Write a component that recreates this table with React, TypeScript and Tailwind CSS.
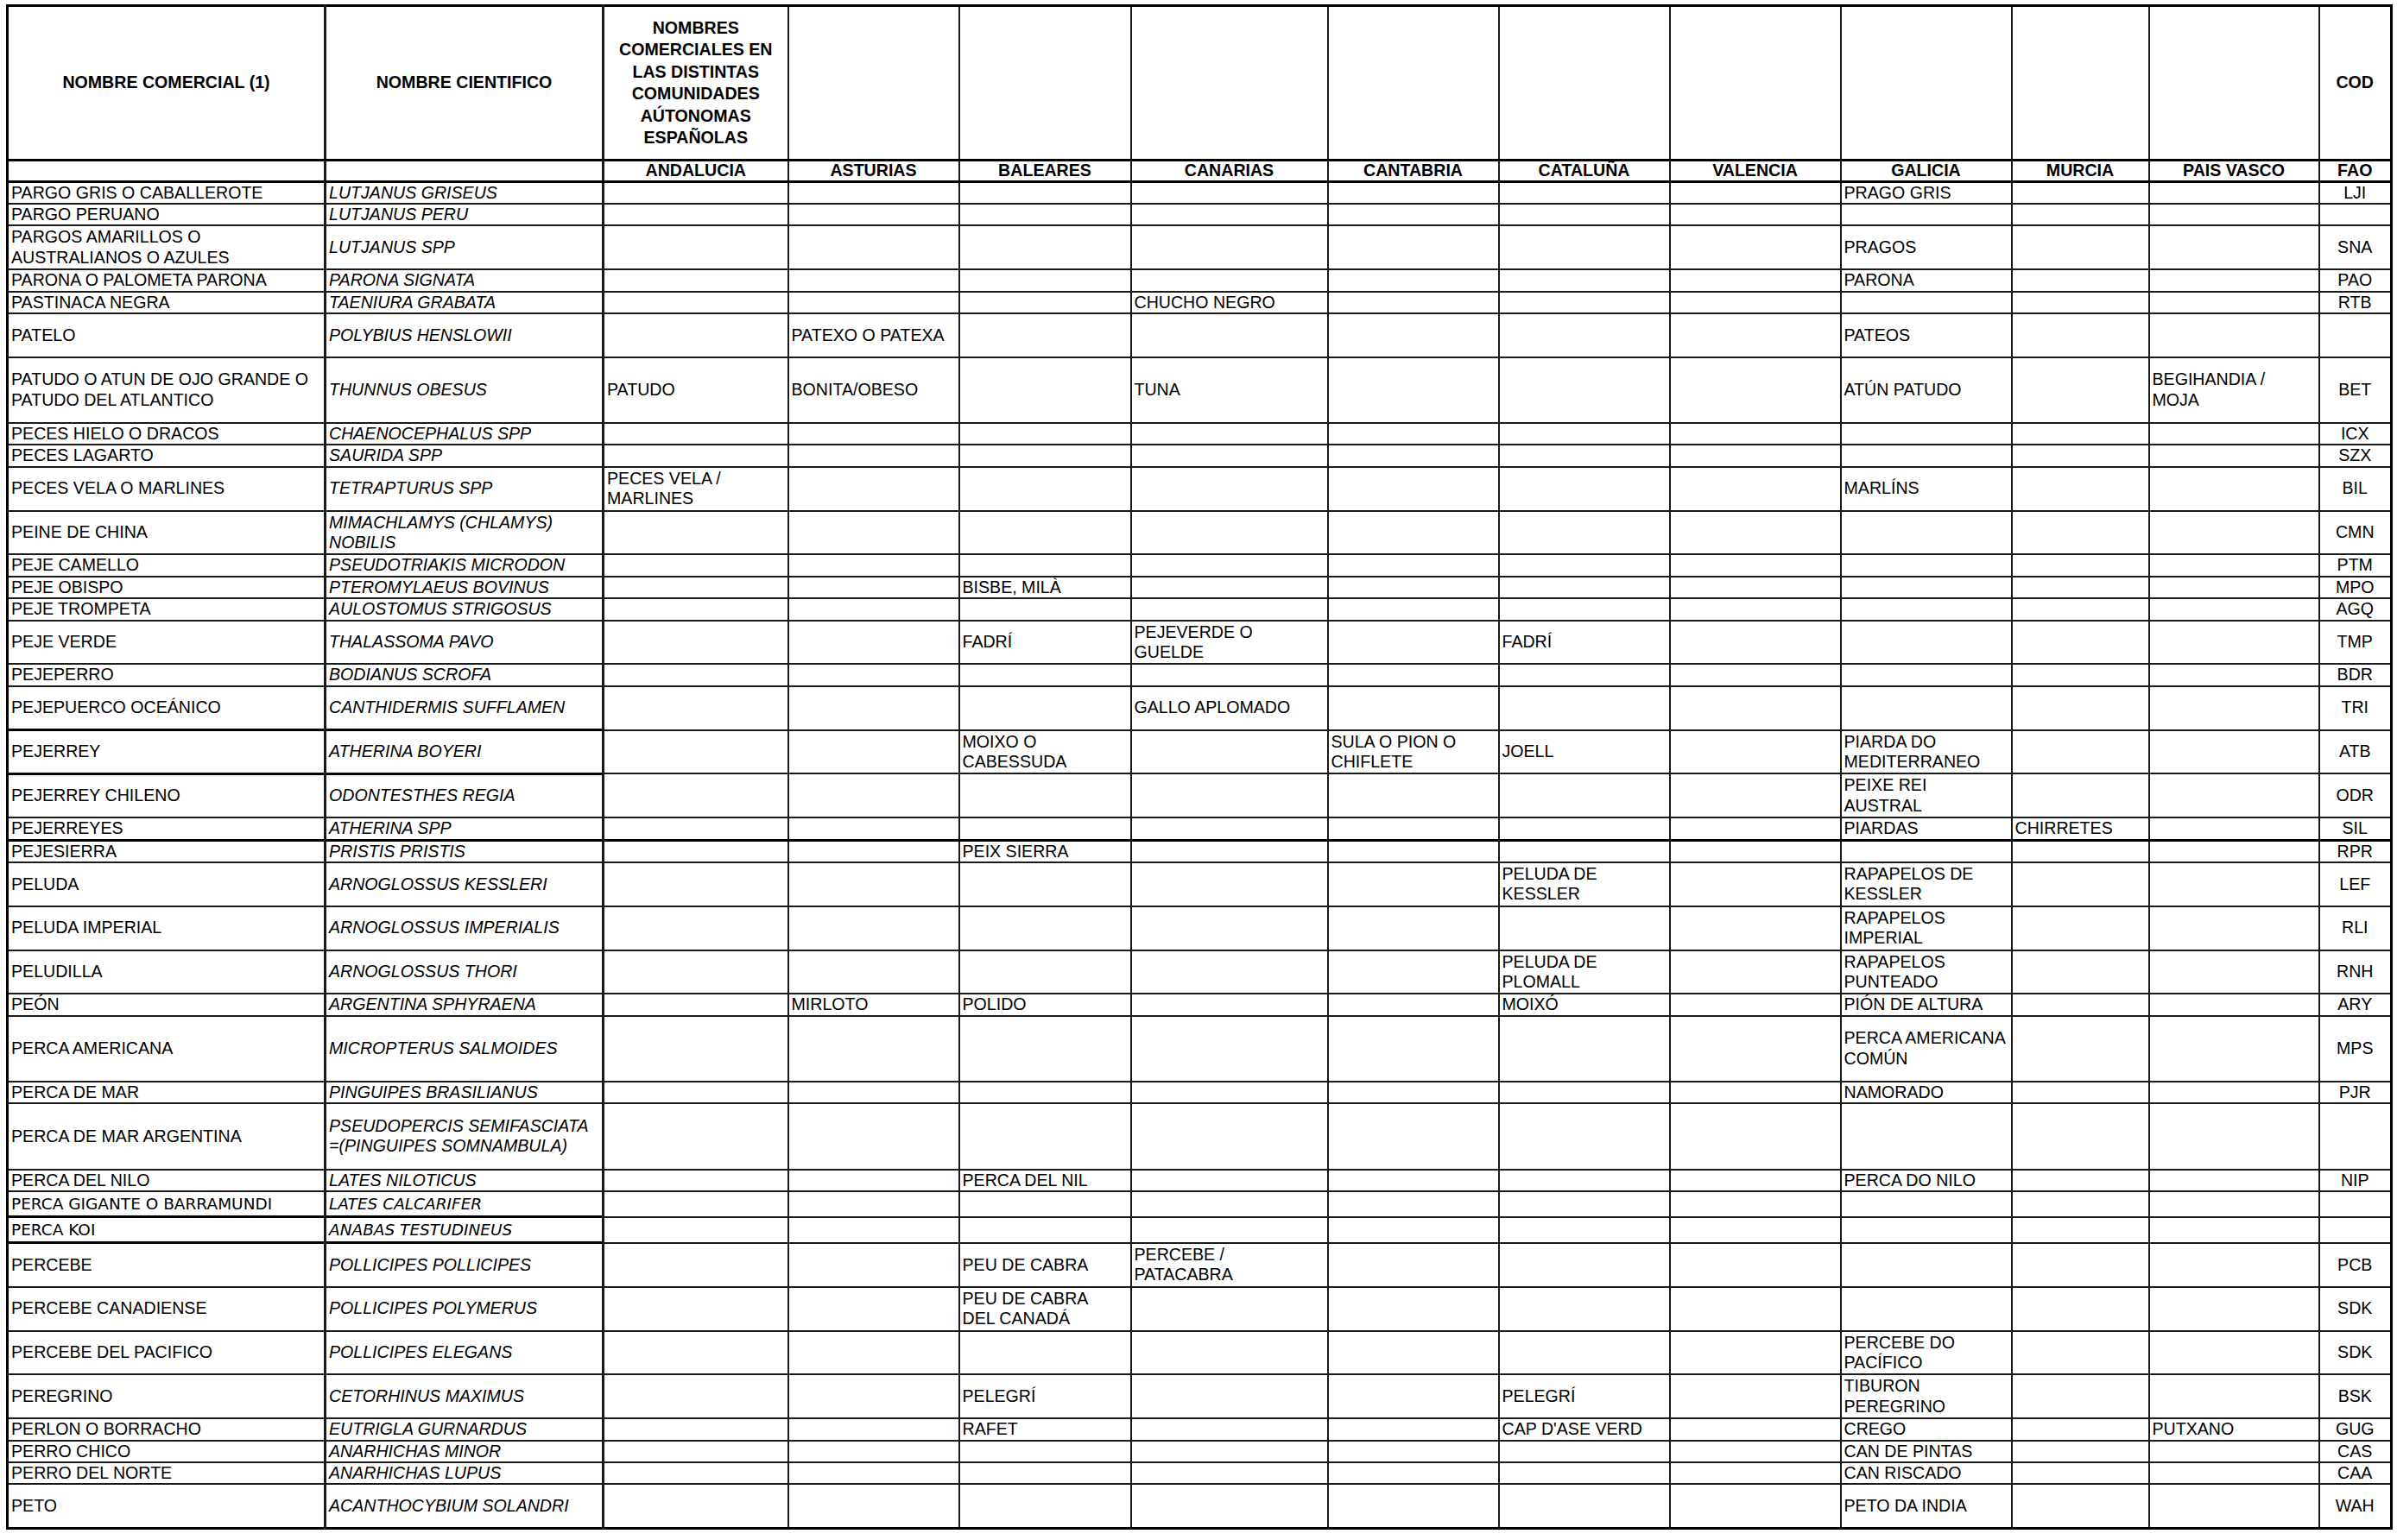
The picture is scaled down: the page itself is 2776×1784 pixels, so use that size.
import React from 'react';

type H = 'S' | 'D' | 'T' | 'C';

interface Row {
  h: H;
  name: string;
  sci: string;
  reg: Partial<Record<Region, string>>;
  fao: string;
  tt?: 'left' | 'all';
  comic?: boolean;
}

type Region = 'an' | 'as' | 'ba' | 'ca' | 'ct' | 'cat' | 'va' | 'ga' | 'mu' | 'pv';

const REGIONS: Region[] = ['an', 'as', 'ba', 'ca', 'ct', 'cat', 'va', 'ga', 'mu', 'pv'];
const REGION_LABELS = ['ANDALUCIA', 'ASTURIAS', 'BALEARES', 'CANARIAS', 'CANTABRIA', 'CATALUÑA', 'VALENCIA', 'GALICIA', 'MURCIA', 'PAIS VASCO'];

const ROW_H: Record<H, string> = {
  S: 'h-[25.4px]',
  D: 'h-[50.8px]',
  T: 'h-[76.2px]',
  C: 'h-[30px]',
};

const ROWS: Row[] = [
  { h: 'S', name: 'PARGO GRIS O CABALLEROTE', sci: 'LUTJANUS GRISEUS', reg: { ga: 'PRAGO GRIS' }, fao: 'LJI' },
  { h: 'S', name: 'PARGO PERUANO', sci: 'LUTJANUS PERU', reg: {}, fao: '' },
  { h: 'D', name: 'PARGOS AMARILLOS O\nAUSTRALIANOS O AZULES', sci: 'LUTJANUS SPP', reg: { ga: 'PRAGOS' }, fao: 'SNA' },
  { h: 'S', name: 'PARONA O PALOMETA PARONA', sci: 'PARONA SIGNATA', reg: { ga: 'PARONA' }, fao: 'PAO' },
  { h: 'S', name: 'PASTINACA NEGRA', sci: 'TAENIURA GRABATA', reg: { ca: 'CHUCHO NEGRO' }, fao: 'RTB' },
  { h: 'D', name: 'PATELO', sci: 'POLYBIUS HENSLOWII', reg: { as: 'PATEXO O PATEXA', ga: 'PATEOS' }, fao: '' },
  {
    h: 'T',
    name: 'PATUDO O ATUN DE OJO GRANDE O\nPATUDO DEL ATLANTICO',
    sci: 'THUNNUS OBESUS',
    reg: { an: 'PATUDO', as: 'BONITA/OBESO', ca: 'TUNA', ga: 'ATÚN PATUDO', pv: 'BEGIHANDIA /\nMOJA' },
    fao: 'BET',
  },
  { h: 'S', name: 'PECES HIELO O DRACOS', sci: 'CHAENOCEPHALUS SPP', reg: {}, fao: 'ICX' },
  { h: 'S', name: 'PECES LAGARTO', sci: 'SAURIDA SPP', reg: {}, fao: 'SZX' },
  { h: 'D', name: 'PECES VELA O MARLINES', sci: 'TETRAPTURUS SPP', reg: { an: 'PECES VELA /\nMARLINES', ga: 'MARLÍNS' }, fao: 'BIL' },
  { h: 'D', name: 'PEINE DE CHINA', sci: 'MIMACHLAMYS (CHLAMYS)\nNOBILIS', reg: {}, fao: 'CMN' },
  { h: 'S', name: 'PEJE CAMELLO', sci: 'PSEUDOTRIAKIS MICRODON', reg: {}, fao: 'PTM' },
  { h: 'S', name: 'PEJE OBISPO', sci: 'PTEROMYLAEUS BOVINUS', reg: { ba: 'BISBE, MILÀ' }, fao: 'MPO' },
  { h: 'S', name: 'PEJE TROMPETA', sci: 'AULOSTOMUS STRIGOSUS', reg: {}, fao: 'AGQ' },
  { h: 'D', name: 'PEJE VERDE', sci: 'THALASSOMA PAVO', reg: { ba: 'FADRÍ', ca: 'PEJEVERDE O\nGUELDE', cat: 'FADRÍ' }, fao: 'TMP' },
  { h: 'S', name: 'PEJEPERRO', sci: 'BODIANUS SCROFA', reg: {}, fao: 'BDR' },
  { h: 'D', name: 'PEJEPUERCO OCEÁNICO', sci: 'CANTHIDERMIS SUFFLAMEN', reg: { ca: 'GALLO APLOMADO' }, fao: 'TRI' },
  {
    h: 'D',
    name: 'PEJERREY',
    sci: 'ATHERINA BOYERI',
    reg: { ba: 'MOIXO O\nCABESSUDA', ct: 'SULA O PION O\nCHIFLETE', cat: 'JOELL', ga: 'PIARDA DO\nMEDITERRANEO' },
    fao: 'ATB',
    tt: 'left',
  },
  { h: 'D', name: 'PEJERREY CHILENO', sci: 'ODONTESTHES REGIA', reg: { ga: 'PEIXE REI\nAUSTRAL' }, fao: 'ODR', tt: 'left' },
  { h: 'S', name: 'PEJERREYES', sci: 'ATHERINA SPP', reg: { ga: 'PIARDAS', mu: 'CHIRRETES' }, fao: 'SIL' },
  { h: 'S', name: 'PEJESIERRA', sci: 'PRISTIS PRISTIS', reg: { ba: 'PEIX SIERRA' }, fao: 'RPR', tt: 'all' },
  { h: 'D', name: 'PELUDA', sci: 'ARNOGLOSSUS KESSLERI', reg: { cat: 'PELUDA DE\nKESSLER', ga: 'RAPAPELOS DE\nKESSLER' }, fao: 'LEF' },
  { h: 'D', name: 'PELUDA IMPERIAL', sci: 'ARNOGLOSSUS IMPERIALIS', reg: { ga: 'RAPAPELOS\nIMPERIAL' }, fao: 'RLI' },
  { h: 'D', name: 'PELUDILLA', sci: 'ARNOGLOSSUS THORI', reg: { cat: 'PELUDA DE\nPLOMALL', ga: 'RAPAPELOS\nPUNTEADO' }, fao: 'RNH' },
  {
    h: 'S',
    name: 'PEÓN',
    sci: 'ARGENTINA SPHYRAENA',
    reg: { as: 'MIRLOTO', ba: 'POLIDO', cat: 'MOIXÓ', ga: 'PIÓN DE ALTURA' },
    fao: 'ARY',
  },
  { h: 'T', name: 'PERCA AMERICANA', sci: 'MICROPTERUS SALMOIDES', reg: { ga: 'PERCA AMERICANA\nCOMÚN' }, fao: 'MPS' },
  { h: 'S', name: 'PERCA DE MAR', sci: 'PINGUIPES BRASILIANUS', reg: { ga: 'NAMORADO' }, fao: 'PJR' },
  { h: 'T', name: 'PERCA DE MAR ARGENTINA', sci: 'PSEUDOPERCIS SEMIFASCIATA\n=(PINGUIPES SOMNAMBULA)', reg: {}, fao: '' },
  { h: 'S', name: 'PERCA DEL NILO', sci: 'LATES NILOTICUS', reg: { ba: 'PERCA DEL NIL', ga: 'PERCA DO NILO' }, fao: 'NIP' },
  { h: 'C', name: 'PERCA GIGANTE O BARRAMUNDI', sci: 'LATES CALCARIFER', reg: {}, fao: '', comic: true },
  { h: 'C', name: 'PERCA KOI', sci: 'ANABAS TESTUDINEUS', reg: {}, fao: '', comic: true, tt: 'left' },
  { h: 'D', name: 'PERCEBE', sci: 'POLLICIPES POLLICIPES', reg: { ba: 'PEU DE CABRA', ca: 'PERCEBE /\nPATACABRA' }, fao: 'PCB', tt: 'left' },
  { h: 'D', name: 'PERCEBE CANADIENSE', sci: 'POLLICIPES POLYMERUS', reg: { ba: 'PEU DE CABRA\nDEL CANADÁ' }, fao: 'SDK' },
  { h: 'D', name: 'PERCEBE DEL PACIFICO', sci: 'POLLICIPES ELEGANS', reg: { ga: 'PERCEBE DO\nPACÍFICO' }, fao: 'SDK' },
  { h: 'D', name: 'PEREGRINO', sci: 'CETORHINUS MAXIMUS', reg: { ba: 'PELEGRÍ', cat: 'PELEGRÍ', ga: 'TIBURON\nPEREGRINO' }, fao: 'BSK' },
  {
    h: 'S',
    name: 'PERLON O BORRACHO',
    sci: 'EUTRIGLA GURNARDUS',
    reg: { ba: 'RAFET', cat: "CAP D'ASE VERD", ga: 'CREGO', pv: 'PUTXANO' },
    fao: 'GUG',
  },
  { h: 'S', name: 'PERRO CHICO', sci: 'ANARHICHAS MINOR', reg: { ga: 'CAN DE PINTAS' }, fao: 'CAS' },
  { h: 'S', name: 'PERRO DEL NORTE', sci: 'ANARHICHAS LUPUS', reg: { ga: 'CAN RISCADO' }, fao: 'CAA' },
  { h: 'D', name: 'PETO', sci: 'ACANTHOCYBIUM SOLANDRI', reg: { ga: 'PETO DA INDIA' }, fao: 'WAH' },
];

const COL_W = [
  'w-[368px]',
  'w-[322px]',
  'w-[214px]',
  'w-[198px]',
  'w-[199px]',
  'w-[228px]',
  'w-[198px]',
  'w-[198px]',
  'w-[198px]',
  'w-[198px]',
  'w-[159px]',
  'w-[197px]',
  'w-[84px]',
];

const cell = 'border-2 border-[#1a1a1a] px-[3px] py-0 align-middle whitespace-pre overflow-hidden leading-[23.4px]';
const head = 'border-2 border-[#1a1a1a] px-[3px] py-0 align-middle text-center font-bold whitespace-pre leading-[25.5px] border-b-[3px] border-b-black';
const sub = 'border-2 border-[#1a1a1a] px-[3px] py-0 align-middle text-center font-bold whitespace-pre leading-[21.5px] border-b-[3px] border-b-black';

function DataRow({ row }: { row: Row }) {
  const leftTop = row.tt ? 'border-t-[3px] border-t-black' : '';
  const allTop = row.tt === 'all' ? 'border-t-[3px] border-t-black' : '';
  const comicFont = "font-['DejaVu_Sans',sans-serif] text-[18.5px]";

  return (
    <tr className={ROW_H[row.h]}>
      <td className={`${cell} border-r-[3px] ${leftTop} ${row.comic ? comicFont : ''}`}>{row.name}</td>
      <td className={`${cell} italic border-r-[3px] ${leftTop} ${row.comic ? comicFont : ''}`}>{row.sci}</td>
      {REGIONS.map((k) => (
        <td key={k} className={`${cell} ${allTop}`}>
          {row.reg[k] ?? ''}
        </td>
      ))}
      <td className={`${cell} text-center ${allTop}`}>{row.fao}</td>
    </tr>
  );
}

export default function App() {
  return (
    <div className="min-h-screen bg-white pl-[7px] pt-[5px] text-black font-['Liberation_Sans',Arial,sans-serif] text-[19.6px]">
      <table className="table-fixed border-collapse border-[3px] border-black w-[2761px]">
        <colgroup>
          {COL_W.map((w, i) => (
            <col key={i} className={w} />
          ))}
        </colgroup>
        <thead>
          <tr className="h-[179px]">
            <th className={`${head} border-r-[3px]`}>NOMBRE COMERCIAL (1)</th>
            <th className={`${head} border-r-[3px]`}>NOMBRE CIENTIFICO</th>
            <th className={head}>
              {'NOMBRES\nCOMERCIALES EN\nLAS DISTINTAS\nCOMUNIDADES\nAÚTONOMAS\nESPAÑOLAS'}
            </th>
            {REGIONS.slice(1).map((k) => (
              <th key={k} className={head} />
            ))}
            <th className={head}>COD</th>
          </tr>
          <tr className="h-[24px]">
            <th className={`${sub} border-r-[3px]`} />
            <th className={`${sub} border-r-[3px]`} />
            {REGION_LABELS.map((label) => (
              <th key={label} className={sub}>
                {label}
              </th>
            ))}
            <th className={sub}>FAO</th>
          </tr>
        </thead>
        <tbody>
          {ROWS.map((row) => (
            <DataRow key={row.name} row={row} />
          ))}
        </tbody>
      </table>
    </div>
  );
}
